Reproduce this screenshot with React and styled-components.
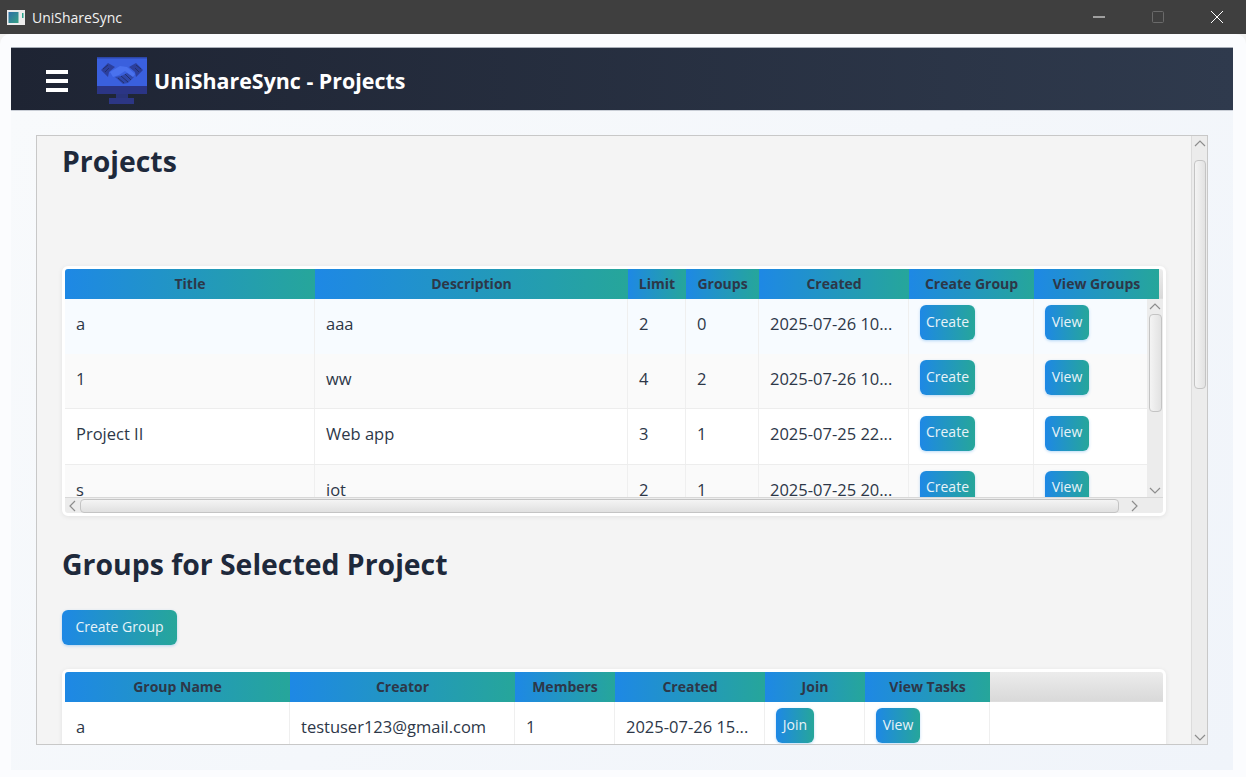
import React from "react";
import styled, { createGlobalStyle } from "styled-components";

const FONT = `"Open Sans", "Noto Sans", sans-serif`;
const GRAD = `linear-gradient(90deg, #1e88e5, #26a69a)`;

const Global = createGlobalStyle`
  html, body { margin: 0; padding: 0; height: 777px; overflow: hidden; background: #fbfcfe; font-family: ${FONT}; }
  * { box-sizing: border-box; }
`;

const Screen = styled.div`
  width: 1246px; height: 777px; display: flex; flex-direction: column; background: #f2f2f2;
`;
const TitleBar = styled.div`
  height: 34px; flex: none; display: flex; align-items: center; background: #3f3f3f; color: #f2f2f2;
  padding-left: 7px; font-size: 14px;
`;
const AppName = styled.span` margin-left: 7px; flex: 1; `;
const WinControls = styled.div` display: flex; align-items: center; height: 100%; `;
const WinBtn = styled.div` width: 59px; height: 100%; display: flex; align-items: center; justify-content: center; `;

const Frame = styled.div`
  flex: 1; min-height: 0; background: #fbfcfe; border-radius: 10px 10px 0 0;
  padding: 13px 13px 7px 11px; display: flex; flex-direction: column;
`;
const NavBar = styled.header`
  height: 64px; flex: none; display: flex; align-items: center; padding: 4px 0 0 35px;
  background: linear-gradient(90deg, #1e2433, #2f3a4d);
  border-top: 1px solid #a9afb8; border-bottom: 1px solid #c9ced6;
`;
const Burger = styled.div`
  width: 22px; height: 22px; display: flex; flex-direction: column; justify-content: space-between; margin-right: 29px;
  span { display: block; height: 4px; background: #fff; }
`;
const NavTitle = styled.h1`
  margin: 0 0 0 7px; font-size: 21.4px; font-weight: 700; color: #fff; line-height: 28px;
`;
const Main = styled.main`
  flex: 1; min-height: 0; padding: 24px 25px 25px; background: linear-gradient(135deg, #f8fafc, #f0f4fa); display: flex;
`;
const ScrollPanel = styled.section`
  flex: 1; min-width: 0; display: flex; border: 1px solid #c8c8c8; background: #f4f4f4;
`;
const Viewport = styled.div`
  flex: 1; min-width: 0; overflow: hidden; padding: 5px 26px 0 25px;
`;
const Heading = styled.h2`
  margin: ${p => p.$top}px 0 ${p => p.$bottom}px; font-size: 28.4px; font-weight: 700; line-height: 40px; color: #1e293b;
`;
const TableCard = styled.div`
  background: #fff; border: 3px solid #fff; border-radius: 6px; width: 1104px;
  height: ${p => p.$height}px; overflow: hidden;
  box-shadow: 0 1px 5px rgba(0,0,0,.08); display: flex; flex-direction: column;
`;
const HeaderRow = styled.div` display: flex; height: 30px; flex: none; `;
const HeaderCell = styled.div`
  width: ${p => p.$w}px; flex: none; height: 30px; display: flex; align-items: center; justify-content: center;
  padding-bottom: 2px; background: ${GRAD}; color: #2d3748; font-size: 14px; font-weight: 700; white-space: nowrap;
`;
const HeaderFiller = styled.div`
  flex: 1; background: linear-gradient(#ececec, #d9d9d9); border-bottom: 1px solid #ddd;
`;
const Middle = styled.div` display: flex; height: ${p => p.$height}px; flex: none; overflow: hidden; `;
const Body = styled.div` flex: 1; min-width: 0; overflow: hidden; `;
const Row = styled.div`
  display: flex; height: 55.2px; background: ${p => p.$bg};
  border-bottom: ${p => p.$line ? "1px solid #ededed" : "none"};
`;
const Cell = styled.div`
  width: ${p => p.$w}px; flex: none; height: 100%; padding: 0 0 6px 11px; display: flex; align-items: center;
  border-right: 1px solid #efefef; color: #2d3748; font-size: 16.5px; white-space: nowrap; overflow: hidden;
`;
const ButtonCell = styled(Cell)` align-items: flex-start; padding-top: 6.2px; padding-bottom: 0; `;
const GradButton = styled.button`
  height: 35px; width: ${p => p.$w}px; padding: 0 0 2px; border: 0; border-radius: 6px; background: ${GRAD};
  color: #e8f3f8; font-family: ${FONT}; font-size: 14px; line-height: 32px; display: block;
  flex: none; box-shadow: 0 1px 3px rgba(30,136,229,.3);
`;
const PageButton = styled(GradButton)` margin: 0 0 24px; `;

const Track = styled.div`
  background: #ececec; display: flex; flex: none; align-items: center; justify-content: space-between;
  flex-direction: ${p => p.$h ? "row" : "column"};
  ${p => p.$h ? `height: 17px; border-top: 1px solid #d8d8d8;` : `width: 16px;`}
`;
const Thumb = styled.div`
  flex: none; border: 1px solid #c4c4c4; border-radius: 4px;
  ${p => p.$h
    ? `height: 14px; width: ${p.$len}px; background: linear-gradient(#f4f4f4, #e0e0e0);`
    : `width: ${p.$thick}px; height: ${p.$len}px; background: linear-gradient(90deg, #f4f4f4, #e2e2e2);`}
`;
const ThumbSlot = styled.div`
  flex: 1; min-width: 0; min-height: 0; display: flex;
  ${p => p.$h ? `align-items: center;` : `flex-direction: column; align-items: center; padding-top: ${p.$top}px;`}
`;
const ArrowBox = styled.div`
  flex: none; display: flex; align-items: center; justify-content: center; width: ${p => p.$w}px; height: ${p => p.$hh}px;
`;
const HBar = styled.div` display: flex; flex: none; `;
const HTrack = styled(Track)` flex: 1; min-width: 0; `;
const Corner = styled.div` width: 16px; height: 17px; flex: none; background: #ececec; border-top: 1px solid #d8d8d8; `;
const PageBar = styled(Track)` align-self: stretch; border-left: 1px solid #dcdcdc; `;

const Chevron = ({ dir }) => {
  const pts = { up: "1,7 6,2 11,7", down: "1,2 6,7 11,2", left: "7,1 2,6 7,11", right: "2,1 7,6 2,11" }[dir];
  const vertical = dir === "up" || dir === "down";
  return (
    <svg width={vertical ? 12 : 9} height={vertical ? 9 : 12} viewBox={vertical ? "0 0 12 9" : "0 0 9 12"}>
      <polyline points={pts} fill="none" stroke="#8d8d8d" strokeWidth="1.2" />
    </svg>
  );
};

const Logo = () => (
  <svg width="50" height="48" viewBox="0 0 50 48">
    <rect y="0" width="50" height="32" fill="#3a60de" />
    <rect y="0" width="50" height="1.5" fill="#2c46a8" />
    <rect y="29" width="50" height="8" fill="#2b3585" />
    <rect x="19" y="37" width="12" height="4" fill="#29347a" />
    <rect x="12" y="41" width="25" height="6" fill="#2c3684" />
    <path d="M4 13 L11 6 L18 10 L12 15 L11 20 Z M46 13 L39 6 L32 10 L38 15 L39 20 Z" fill="#2c3f9c" />
    <path d="M18 20 L26 27 L31 26 L37 20 L30 16 L24 19 Z" fill="#2f48ac" />
    <path d="M13 15 L23 9 L30 10 L38 17 L36 20 L28 14 L22 18 L16 20 Z" fill="#4a72ee" />
    <path d="M21 21 L27 26 M24 19 L31 25 M28 17 L34 23" stroke="#22306e" strokeWidth="1" fill="none" />
    <path d="M6 12 L11 8 M8 15 L12 11 M44 12 L39 8 M42 15 L38 11" stroke="#22306e" strokeWidth="1" fill="none" />
  </svg>
);

const AppIcon = () => (
  <svg width="18" height="15" viewBox="0 0 18 15">
    <defs>
      <linearGradient id="appIconFill" x1="0" y1="0" x2="1" y2="1">
        <stop offset="0" stopColor="#2f6fa8" />
        <stop offset="1" stopColor="#37a184" />
      </linearGradient>
    </defs>
    <rect width="18" height="15" fill="#ececec" />
    <rect x="1.5" y="2" width="10" height="11" fill="url(#appIconFill)" />
    <rect x="15" y="3" width="1.5" height="5" fill="#2aa58c" />
  </svg>
);

const WindowIcons = () => (
  <WinControls>
    <WinBtn><svg width="12" height="2"><rect width="12" height="1" y="0.5" fill="#fff" /></svg></WinBtn>
    <WinBtn><svg width="12" height="12"><rect x="0.5" y="0.5" width="11" height="11" rx="1" fill="none" stroke="#6a6a6a" /></svg></WinBtn>
    <WinBtn><svg width="12" height="12"><path d="M0 0 L12 12 M12 0 L0 12" stroke="#fff" strokeWidth="1" /></svg></WinBtn>
  </WinControls>
);

const projectCols = [
  { t: "Title", w: 250 }, { t: "Description", w: 313 }, { t: "Limit", w: 58 }, { t: "Groups", w: 73 },
  { t: "Created", w: 150 }, { t: "Create Group", w: 125 }, { t: "View Groups", w: 125 },
];
const projects = [
  { v: ["a", "aaa", "2", "0", "2025-07-26 10..."], bg: "#f7fbff" },
  { v: ["1", "ww", "4", "2", "2025-07-26 10..."], bg: "#fafafa", line: true },
  { v: ["Project II", "Web app", "3", "1", "2025-07-25 22..."], bg: "#fff", line: true },
  { v: ["s", "iot", "2", "1", "2025-07-25 20..."], bg: "#fafafa" },
];
const groupCols = [
  { t: "Group Name", w: 225 }, { t: "Creator", w: 225 }, { t: "Members", w: 100 }, { t: "Created", w: 150 },
  { t: "Join", w: 100 }, { t: "View Tasks", w: 125 },
];

const VBar = ({ thick, top, len, Comp = Track }) => (
  <Comp>
    <ArrowBox $w={16} $hh={14}><Chevron dir="up" /></ArrowBox>
    <ThumbSlot $top={top}><Thumb $thick={thick} $len={len} /></ThumbSlot>
    <ArrowBox $w={16} $hh={14}><Chevron dir="down" /></ArrowBox>
  </Comp>
);

export default function App() {
  return (
    <Screen>
      <Global />
      <TitleBar>
        <AppIcon />
        <AppName>UniShareSync</AppName>
        <WindowIcons />
      </TitleBar>
      <Frame>
        <NavBar>
          <Burger><span /><span /><span /></Burger>
          <Logo />
          <NavTitle>UniShareSync - Projects</NavTitle>
        </NavBar>
        <Main>
          <ScrollPanel>
            <Viewport>
              <Heading $top={0} $bottom={85}>Projects</Heading>
              <TableCard $height={250}>
                <HeaderRow>
                  {projectCols.map(c => <HeaderCell key={c.t} $w={c.w}>{c.t}</HeaderCell>)}
                  <HeaderFiller />
                </HeaderRow>
                <Middle $height={198}>
                  <Body>
                    {projects.map(r => (
                      <Row key={r.v[0]} $bg={r.bg} $line={r.line}>
                        {r.v.map((x, i) => <Cell key={i} $w={projectCols[i].w}>{x}</Cell>)}
                        <ButtonCell $w={125}><GradButton $w={55}>Create</GradButton></ButtonCell>
                        <ButtonCell $w={125}><GradButton $w={44}>View</GradButton></ButtonCell>
                      </Row>
                    ))}
                  </Body>
                  <VBar thick={13} top={1} len={98} />
                </Middle>
                <HBar>
                  <HTrack $h>
                    <ArrowBox $w={15} $hh={16}><Chevron dir="left" /></ArrowBox>
                    <ThumbSlot $h><Thumb $h $len={1039} /></ThumbSlot>
                    <ArrowBox $w={26} $hh={16}><Chevron dir="right" /></ArrowBox>
                  </HTrack>
                  <Corner />
                </HBar>
              </TableCard>
              <Heading $top={28} $bottom={26}>Groups for Selected Project</Heading>
              <PageButton $w={115}>Create Group</PageButton>
              <TableCard $height={140}>
                <HeaderRow>
                  {groupCols.map(c => <HeaderCell key={c.t} $w={c.w}>{c.t}</HeaderCell>)}
                  <HeaderFiller />
                </HeaderRow>
                <Row $bg="#fff">
                  <Cell $w={225}>a</Cell>
                  <Cell $w={225}>testuser123@gmail.com</Cell>
                  <Cell $w={100}>1</Cell>
                  <Cell $w={150}>2025-07-26 15...</Cell>
                  <ButtonCell $w={100}><GradButton $w={38}>Join</GradButton></ButtonCell>
                  <ButtonCell $w={125}><GradButton $w={44}>View</GradButton></ButtonCell>
                </Row>
              </TableCard>
            </Viewport>
            <VBar thick={12} top={10} len={229} Comp={PageBar} />
          </ScrollPanel>
        </Main>
      </Frame>
    </Screen>
  );
}
